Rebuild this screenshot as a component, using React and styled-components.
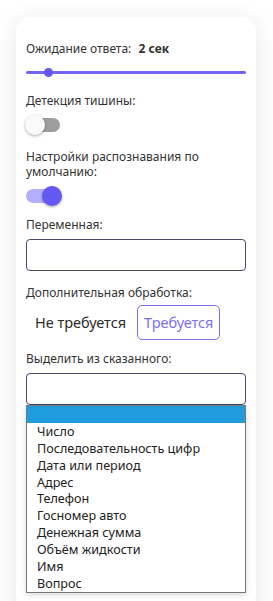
import React from 'react'
import styled, { createGlobalStyle } from 'styled-components'

const Global = createGlobalStyle`
  body {
    margin: 0;
    background: #ffffff;
    font-family: "Noto Sans", "Liberation Sans", sans-serif;
    color: #2b2b2b;
  }
`

const Page = styled.div`
  width: 273px;
  height: 601px;
  overflow: hidden;
  padding: 17px 17px 0 16px;
  box-sizing: border-box;
`

const Card = styled.div`
  background: #fff;
  border-radius: 14px;
  box-shadow: 0 4px 24px rgba(0, 0, 0, 0.1);
  padding: 24px 10px 40px;
  min-height: 640px;
  box-sizing: border-box;
  display: flex;
  flex-direction: column;
`

const Label = styled.div`
  font-size: 12px;
  line-height: 15px;
  color: #333;
  margin-bottom: ${props => props.gap || 0}px;
`

const Bold = styled.span`
  font-weight: 700;
  margin-left: 4px;
`

const Slider = styled.div`
  position: relative;
  height: 3px;
  border-radius: 2px;
  background: #7267f4;
  margin: 15px 0 19px;
`

const Thumb = styled.div`
  position: absolute;
  top: -3px;
  width: 9px;
  height: 9px;
  border-radius: 50%;
  background: #6458f2;
`

const Switch = styled.div`
  position: relative;
  width: 34px;
  height: 14px;
  border-radius: 7px;
  background: ${props => (props.on ? '#b5affb' : '#9e9e9e')};
  margin: 10px 0 ${props => props.space || 17}px;
`

const Knob = styled.div`
  position: absolute;
  top: -3px;
  left: ${props => (props.on ? '16px' : '-1px')};
  width: 20px;
  height: 20px;
  border-radius: 50%;
  background: ${props => (props.on ? '#6458f2' : '#fafafa')};
  box-shadow: 0 1px 3px rgba(0, 0, 0, 0.35);
`

const Input = styled.div`
  height: 32px;
  border: 1px solid #474a6c;
  border-radius: 4px;
  box-sizing: border-box;
  margin-bottom: ${props => props.gap || 0}px;
`

const Toggle = styled.div`
  display: flex;
  align-items: center;
  gap: 4px;
  margin: 5px 0 11px 2px;
`

const Option = styled.div`
  font-size: 14.5px;
  line-height: 19px;
  padding: 7px 6px;
  border-radius: 5px;
  border: 1px solid ${props => (props.active ? '#7b6ff6' : 'transparent')};
  color: ${props => (props.active ? '#7b6ff6' : '#2b2b2b')};
`

const SelectWrap = styled.div`
  position: relative;
`

const Menu = styled.ul`
  position: absolute;
  top: 32px;
  left: 0;
  right: 0;
  margin: 0;
  padding: 0;
  list-style: none;
  background: #fff;
  border: 1px solid #777;
  box-shadow: 0 2px 6px rgba(0, 0, 0, 0.15);
`

const Item = styled.li`
  height: 16.9px;
  line-height: 17px;
  font-size: 12.6px;
  padding-left: 10px;
  color: #222;
  white-space: nowrap;
  background: ${props => (props.selected ? '#1e9cdb' : 'transparent')};
`

const items = [
  '',
  'Число',
  'Последовательность цифр',
  'Дата или период',
  'Адрес',
  'Телефон',
  'Госномер авто',
  'Денежная сумма',
  'Объём жидкости',
  'Имя',
  'Вопрос'
]

const App = () => {
  const value = 2
  const pct = (value / 20) * 100
  return (
    <Page>
      <Global />
      <Card>
        <Label>
          Ожидание ответа: <Bold>{value} сек</Bold>
        </Label>
        <Slider>
          <Thumb style={{ left: `calc(${pct}% - 4px)` }} />
        </Slider>
        <Label>Детекция тишины:</Label>
        <Switch>
          <Knob />
        </Switch>
        <Label>Настройки распознавания по умолчанию:</Label>
        <Switch on space={14}>
          <Knob on />
        </Switch>
        <Label gap={7}>Переменная:</Label>
        <Input gap={14} />
        <Label>Дополнительная обработка:</Label>
        <Toggle>
          <Option>Не требуется</Option>
          <Option active>Требуется</Option>
        </Toggle>
        <Label gap={7}>Выделить из сказанного:</Label>
        <SelectWrap>
          <Input />
          <Menu>
            {items.map((item, i) => (
              <Item key={i} selected={i === 0}>{item}</Item>
            ))}
          </Menu>
        </SelectWrap>
      </Card>
    </Page>
  )
}

export default App
